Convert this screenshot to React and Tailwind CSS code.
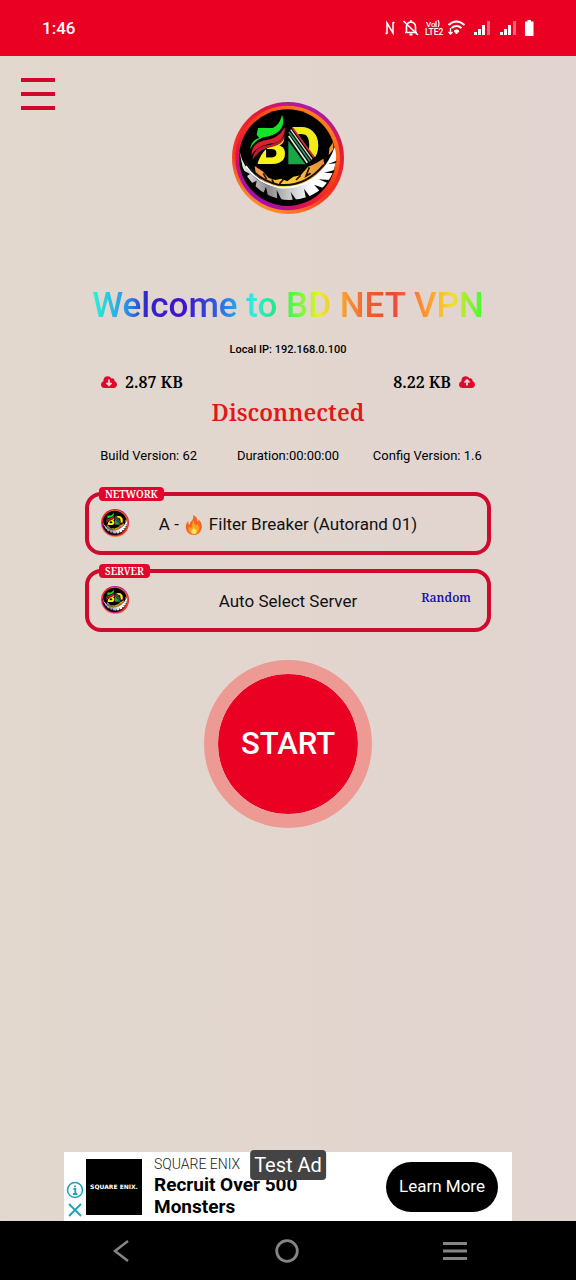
import React, { useId } from "react";

const serif = "font-['Noto_Serif','Droid_Serif','DejaVu_Serif_Condensed','DejaVu_Serif',serif]";

function Logo({ className }) {
  const id = useId();
  const outer = id + "outer";
  const inner = id + "inner";
  const gold = id + "gold";
  const silver = id + "silver";
  return (
    <svg viewBox="30 30 336 336" className={className} role="img" aria-label="BD Net logo">
      <defs>
        <linearGradient id={outer} x1="0.75" y1="0.05" x2="0.3" y2="1">
          <stop offset="0" stopColor="#a51cb4" />
          <stop offset="0.2" stopColor="#e0183c" />
          <stop offset="0.65" stopColor="#f8361c" />
          <stop offset="1" stopColor="#ff9a2c" />
        </linearGradient>
        <linearGradient id={inner} x1="0.85" y1="0.1" x2="0.2" y2="0.9">
          <stop offset="0" stopColor="#ff8420" />
          <stop offset="0.45" stopColor="#f83a14" />
          <stop offset="0.75" stopColor="#e4104a" />
          <stop offset="1" stopColor="#a010b8" />
        </linearGradient>
        <linearGradient id={gold} x1="0" y1="0" x2="1" y2="0">
          <stop offset="0" stopColor="#f0904c" />
          <stop offset="0.5" stopColor="#ffd02c" />
          <stop offset="1" stopColor="#e88a3c" />
        </linearGradient>
        <linearGradient id={silver} x1="0" y1="0" x2="1" y2="0">
          <stop offset="0" stopColor="#f4f4f4" />
          <stop offset="0.3" stopColor="#8c8c8c" />
          <stop offset="0.5" stopColor="#c4c4c4" />
          <stop offset="0.75" stopColor="#ffffff" />
        </linearGradient>
      </defs>
      <circle cx="198" cy="198" r="168" fill={"url(#" + outer + ")"} />
      <circle cx="197" cy="198" r="157" fill={"url(#" + inner + ")"} />
      <circle cx="196" cy="197" r="145" fill="#000" />
      <path d="M98 222 L122 238 L140 258 L160 264 L178 260 L196 268 L214 254 L236 250 L258 224 L282 214 L304 200 L308 222 L284 258 Q240 288 190 288 Q136 284 102 250 Z" fill={"url(#" + gold + ")"} />
      <path d="M334 150 L322 168 L320 190 L334 172 Z" fill="#ee9a3a" />
      <path d="M124 244 L134 262 M150 262 L156 276 M184 262 L172 276 M236 250 L222 264 M262 226 L252 252 L266 244" stroke="#251006" strokeWidth="5" fill="none" />
      <path d="M52 176 Q64 230 108 264 Q166 302 232 280 Q306 252 338 166 Q348 196 336 232 Q316 292 258 314 Q196 336 140 310 Q84 282 62 226 Z" fill={"url(#" + silver + ")"} />
      <path d="M344 206 L318 216 L341 214 Z M338 234 L306 242 L334 244 Z M324 264 L290 262 L318 274 Z M304 288 L276 278 L294 298 Z M264 314 L246 290 L252 320 Z M226 328 L206 300 L214 330 Z M182 330 L164 294 L166 326 Z M138 312 L132 284 L124 304 Z M100 288 L104 266 L88 274 Z M72 254 L84 246 L62 234 Z" fill="#080808" />
      <path d="M72 222 Q106 274 170 286 Q250 294 312 226" stroke="#fff" strokeWidth="5" fill="none" />
      <path d="M68 206 Q102 262 168 278 Q248 288 306 218" stroke="#111" strokeWidth="6" fill="none" />
      <text x="98" y="217" fontFamily="Roboto, sans-serif" fontWeight="900" fontSize="150" fill="#f7f21a">B</text>
      <text x="194" y="217" fontFamily="Roboto, sans-serif" fontWeight="900" fontSize="154" fill="#f0ec18">D</text>
      <path d="M88 222 V104 H170 Q190 108 194 90 L196 126 Q182 150 150 162 Q120 170 104 222 Z" fill="#000" />
      <path d="M84 172 Q88 144 112 138 L104 128 L108 108 H152 Q174 98 180 68 Q192 100 168 120 Q154 132 124 136 Q94 148 84 172 Z" fill="#16e22a" />
      <path d="M88 190 Q90 154 122 146 Q170 142 188 106 Q192 140 160 152 Q104 158 88 190 Z" fill="#d8202e" />
      <path d="M92 204 Q94 170 126 161 Q166 158 188 132 Q186 156 152 164 Q112 168 92 204 Z" fill="#b81f2c" />
      <path d="M196 104 H210 L286 206 L270 220 H196 Z" fill="#000" />
      <path d="M199 146 L250 217 H199 Z" fill="#17a746" />
      <path d="M200 132 L256 212" stroke="#d8efe0" strokeWidth="5" />
      <path d="M201 120 L264 208" stroke="#22985a" strokeWidth="5" />
      <path d="M206 113 L270 202" stroke="#f2d5d2" strokeWidth="4" />
      <path d="M212 109 L276 196" stroke="#c9303a" strokeWidth="5" />
    </svg>
  );
}

function StatusIcons() {
  return (
    <svg viewBox="0 0 156 24" className="h-6 w-39" fill="none" stroke="#fff" role="img" aria-label="NFC, muted, VoLTE, Wi-Fi, signal and battery">
      <path d="M3 18 V7 L9 17 V6 M1.500 17 L3 18 M9 6 L10.500 7" strokeWidth="1.500" />
      <path d="M22.500 16 V11 Q22.500 6.500 27 6 Q31.500 6.500 31.500 11 V16 M21 16.500 H33 M27 4 V6" strokeWidth="1.600" />
      <path d="M25.500 18.500 H28.500" strokeWidth="2" />
      <path d="M19.500 5 L34 19" strokeWidth="1.600" />
      <g fill="#fff" stroke="none" fontFamily="Roboto, sans-serif" fontWeight="500">
        <text x="42" y="11" fontSize="8">Vo</text>
        <text x="41" y="19" fontSize="8.500">LTE2</text>
      </g>
      <path d="M52 5 V11 M54 4 Q56 8 54 11" strokeWidth="1.200" />
      <path d="M64.500 9 Q72.500 2 80.500 9 M67.500 12 Q72.500 8 77.500 12" strokeWidth="2" />
      <path d="M70 15 Q72.500 12.500 75 15 L72.500 18 Z" fill="#fff" strokeWidth="1" />
      <path d="M66.500 12 V18 M64.500 16 L66.500 18 L68.500 16" strokeWidth="1.300" />
      {[90, 116].map((x) => (
        <g key={x} fill="#fff" stroke="none">
          <rect x={x} y="16" width="3" height="3" />
          <rect x={x + 4} y="13" width="3" height="6" />
          <rect x={x + 8} y="9" width="3" height="10" />
          <rect x={x + 13} y="5" width="3" height="14" opacity="0.4" />
        </g>
      ))}
      <path d="M143.500 4 H147 V5.500 H149.500 V20 H141 V5.500 H143.500 Z" fill="#fff" stroke="none" />
    </svg>
  );
}

function Cloud({ up }) {
  return (
    <svg viewBox="0 0 16 12" className="h-3 w-4" aria-hidden="true">
      <path d="M4 12 Q0 12 0 8.500 Q0 6 2.400 5.200 Q2.200 1 6.200 0.300 Q9 0 10.500 2.400 Q13.500 2 13.600 5 Q16 6 16 8.600 Q15.800 12 12.500 12 Z" fill="#dc0a2d" />
      <path d={up ? "M8 9.500 V4.500 M5.500 6.500 L8 4 L10.500 6.500" : "M8 3.500 V8.500 M5.500 6.800 L8 9.300 L10.500 6.800"} stroke="#f6dcd8" strokeWidth="1.700" fill="none" />
    </svg>
  );
}

function Flame() {
  return (
    <svg viewBox="0 0 18 20" className="h-5 w-4.5" role="img" aria-label="fire">
      <path d="M8 0 Q13 2 12.500 7 Q14 6 13.600 4.200 Q18 9 16.500 14 Q15 19.500 9 20 Q2 19.500 1 14 Q0 9 3.200 6 Q3 9 4.500 10 Q4.500 8 6.500 6 Q9 3.500 8 0 Z" fill="#f4661f" />
      <path d="M8.500 5 Q9 9 11 10.500 Q12.500 10 12.800 8.500 Q15 12 14 15 Q12.500 19 9 19 Q4 18.500 3.500 14.500 Q3.500 12.500 5 11.500 Q5.500 13 6.500 13 Q6.500 9 8.500 5 Z" fill="#fca120" />
      <path d="M8.800 11.500 Q9 14 11 14.500 Q12.500 19 9 19 Q5.500 18.500 6.500 15 Q8.500 14 8.800 11.500 Z" fill="#ffe26a" />
    </svg>
  );
}

function Selector({ label, note, children }) {
  return (
    <section className="relative">
      <button type="button" className="grid h-[63px] w-full grid-cols-[56px_1fr_56px] items-center rounded-2xl border-4 border-[#cf0a2c] px-3 text-[17px] text-[#111]">
        <Logo className="mb-0.5 size-7" />
        <span className="flex items-center justify-center gap-1.5 pt-0.5 whitespace-nowrap">{children}</span>
        <span className={"mb-1.5 justify-self-end pr-1 text-xs font-semibold text-[#1a12b8] " + serif}>{note}</span>
      </button>
      <span className={"absolute -top-[5px] left-3.5 rounded-sm bg-[#e2062c] px-1.5 text-[10px] leading-3.5 font-semibold text-white " + serif}>{label}</span>
    </section>
  );
}

export default function App() {
  return (
    <div className="flex min-h-screen flex-col bg-linear-to-r from-[#e2d8ce] via-[#e2d6cf] to-[#e2d4d0] font-[Roboto,sans-serif] text-black">
      <header className="flex h-14 items-center justify-between bg-[#e90022] pr-9 pl-10.5 text-white">
        <time className="pt-0.5 text-[17px] font-medium">1:46</time>
        <StatusIcons />
      </header>

      <main className="flex flex-1 flex-col">
        <div className="grid grid-cols-[1fr_112px_1fr] items-start px-5 pt-5">
          <button type="button" aria-label="Open menu" className="ml-px flex w-8.5 flex-col gap-2.5 py-0.5">
            <span className="h-1 w-full bg-[#d2082b]" />
            <span className="h-1 w-full bg-[#d2082b]" />
            <span className="h-1 w-full bg-[#d2082b]" />
          </button>
          <Logo className="mt-6.5 size-28" />
        </div>

        <div className="px-[85px]">
          <h1 className="mx-auto mt-17 w-fit bg-[linear-gradient(90deg,#2ff5d8_0%,#2a8fe8_9%,#3226c8_14%,#4210d0_23%,#3048dc_30%,#2a98ea_36%,#2feee0_41%,#22e890_46%,#62f83c_52%,#e8f030_58%,#f8a030_64%,#f05a32_71%,#f04838_77%,#ff9430_85%,#f0e030_92%,#50fa30_99%)] bg-clip-text text-[35px] leading-12 font-medium whitespace-nowrap text-transparent">
            Welcome to BD NET VPN
          </h1>
          <p className="mt-3 text-center text-[11px] leading-4 font-medium">Local IP: 192.168.0.100</p>
          <div className={"mt-3 flex justify-between px-4 text-base leading-6 font-semibold " + serif}>
            <span className="flex items-center gap-2"><Cloud />2.87 KB</span>
            <span className="flex items-center gap-2">8.22 KB<Cloud up /></span>
          </div>
          <p className={"mt-0.5 text-center text-[23px] leading-8 font-semibold text-[#e01818] " + serif}>Disconnected</p>
          <div className="-mx-1.5 mt-5 grid grid-cols-3 text-center text-[13px] leading-4 whitespace-nowrap">
            <span>Build Version: 62</span>
            <span>Duration:00:00:00</span>
            <span>Config Version: 1.6</span>
          </div>
          <div className="mt-7 flex flex-col gap-3.5">
            <Selector label="NETWORK">A - <Flame /> Filter Breaker (Autorand 01)</Selector>
            <Selector label="SERVER" note="Random">Auto Select Server</Selector>
          </div>
        </div>

        <button type="button" className="mx-auto mt-7 size-42 rounded-full border-14 border-[#ec9a93] bg-[#e90022] bg-clip-padding text-[31px] font-medium text-white">
          START
        </button>
      </main>

      <aside className="relative mx-16 mt-6 flex items-center bg-white pr-3.5">
        <div className="flex w-5.5 flex-col items-center gap-1 self-end pb-1">
          <button type="button" aria-label="Ad information">
            <svg viewBox="0 0 18 18" className="size-4.5" fill="none" stroke="#1ba3b8" strokeWidth="1.500">
              <circle cx="9" cy="9" r="7.500" />
              <path d="M9 4.500 V6.300 M7.500 8 H9.300 V13 M7 13 H11.300" strokeWidth="1.800" />
            </svg>
          </button>
          <button type="button" aria-label="Close ad">
            <svg viewBox="0 0 14 14" className="size-3.5" stroke="#1ba3b8" strokeWidth="1.800">
              <path d="M1 1 L13 13 M13 1 L1 13" />
            </svg>
          </button>
        </div>
        <div className="flex size-14 items-center justify-center bg-black">
          <span className="font-['DejaVu_Sans',sans-serif] text-[6px] font-bold whitespace-nowrap text-white">SQUARE ENIX.</span>
        </div>
        <div className="flex-1 pt-0.5 pb-[3px] pl-3">
          <p className="text-sm leading-5 font-light text-[#222]">SQUARE ENIX</p>
          <p className="w-40 text-[19px] leading-5.5 font-bold">Recruit Over 500 Monsters</p>
        </div>
        <a href="#learn" className="flex h-12.5 w-28 items-center justify-center rounded-full bg-black text-[17px] whitespace-nowrap text-white">Learn More</a>
        <span className="absolute -top-0.5 left-1/2 -translate-x-1/2 rounded-sm bg-[#444] px-1 text-xl leading-7.5 whitespace-nowrap text-white">Test Ad</span>
      </aside>

      <nav className="flex h-[59px] items-center justify-center gap-36 bg-black" aria-label="System">
        <button type="button" aria-label="Back">
          <svg viewBox="0 0 22 24" className="h-6 w-5.5" fill="none" stroke="#858585" strokeWidth="2.500"><path d="M19 2 L6 12 L19 22" /></svg>
        </button>
        <button type="button" aria-label="Home">
          <svg viewBox="0 0 24 24" className="size-6" fill="none" stroke="#858585" strokeWidth="2.800"><circle cx="12" cy="12" r="10.300" /></svg>
        </button>
        <button type="button" aria-label="Recent apps">
          <svg viewBox="0 0 24 24" className="size-6" stroke="#858585" strokeWidth="2.800"><path d="M0 4.500 H24 M0 12 H24 M0 19.500 H24" /></svg>
        </button>
      </nav>
    </div>
  );
}
